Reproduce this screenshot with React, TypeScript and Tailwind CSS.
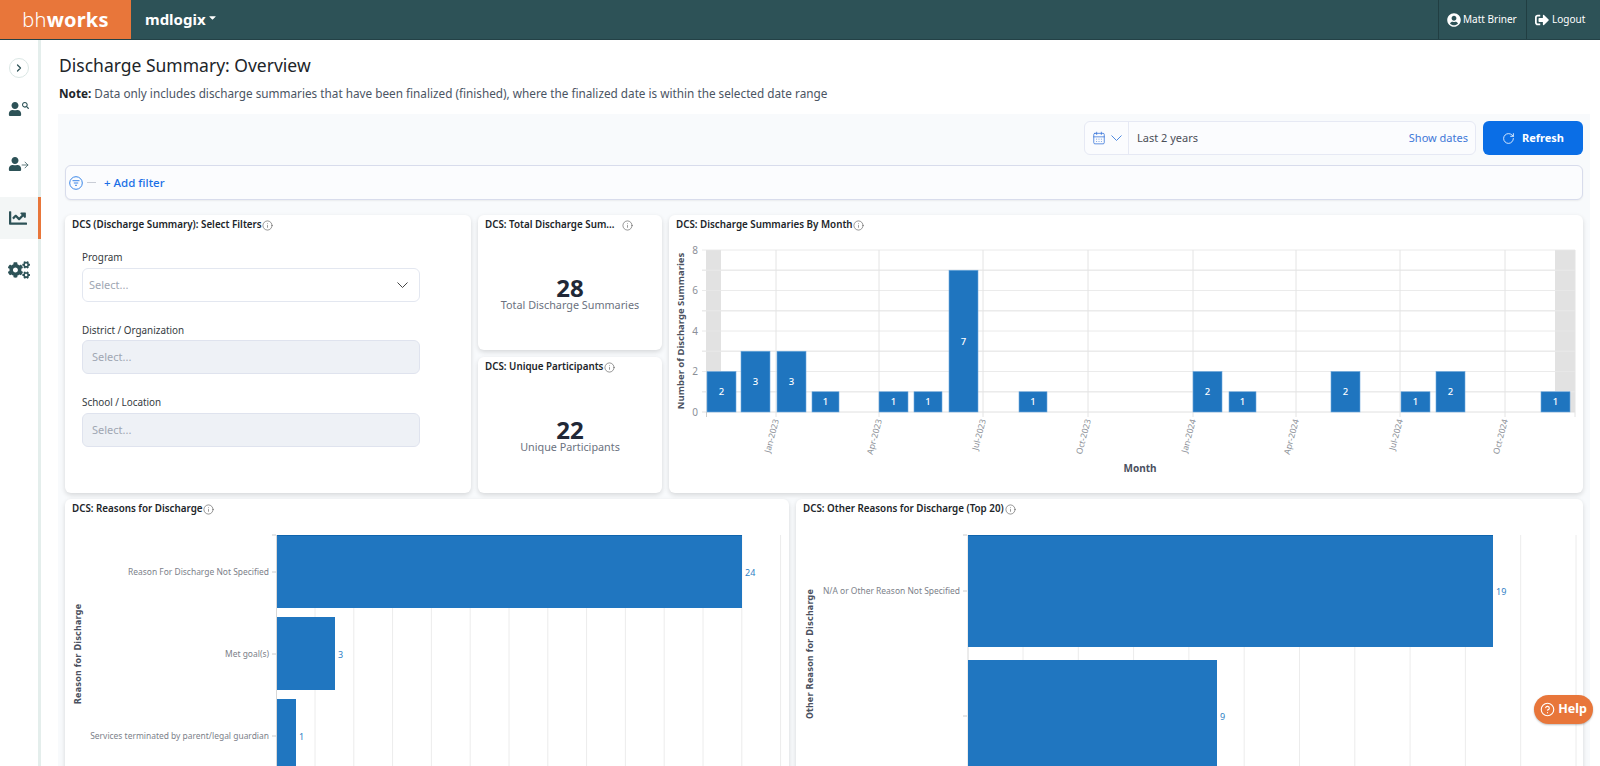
import React from "react";
import { FaUser, FaUserCircle, FaSignOutAlt, FaCogs, FaChartLine, FaSearch, FaCaretDown } from "react-icons/fa";
import { ChevronRight, ArrowRight, CalendarDays, RotateCw, Info, CircleHelp } from "lucide-react";

const Chevron = ({ className }: { className: string }) => (
  <svg width="11" height="6" viewBox="0 0 11 6" fill="none" stroke="currentColor" strokeWidth="1" className={className}>
    <path d="M0.5 0.5 5.5 5.5 10.5 0.5" />
  </svg>
);

const Title = ({ text, gap = "ml-[2px]" }: { text: string; gap?: string }) => (
  <div className="flex items-center h-5 pl-[7px] pt-[1px] text-[9.8px] font-semibold text-[#212529] whitespace-nowrap">
    <span>{text}</span>
    <Info className={`${gap} w-[11px] h-[11px] text-[#444]`} strokeWidth={1.2} />
  </div>
);

const Card = ({ className, children }: { className: string; children: React.ReactNode }) => (
  <div className={`bg-white rounded-md shadow-[0_2px_5px_rgba(0,0,0,0.14)] overflow-hidden ${className}`}>{children}</div>
);

const Field = ({ label, disabled, className, boxGap }: { label: string; disabled?: boolean; className: string; boxGap: string }) => (
  <div className={className}>
    <div className="h-[15px] text-[9.9px] leading-[15px] text-[#343a40]">{label}</div>
    <div
      className={`${boxGap} h-[34px] rounded-md border flex items-center justify-between text-[11px] text-[#a0a7b3] ${
        disabled ? "bg-[#eef1f6] border-[#dfe3ee] pl-[9px]" : "bg-white border-[#e3e7f0] pl-[6px] pr-[11px]"
      }`}
    >
      <span>Select...</span>
      {!disabled && <Chevron className="text-[#444]" />}
    </div>
  </div>
);

const Stat = ({ title, value, label, className, gap }: { title: string; value: string; label: string; className: string; gap?: string }) => (
  <Card className={`flex flex-col ${className}`}>
    <Title text={title} gap={gap} />
    <div className="flex-1 flex flex-col items-center justify-center pt-[3px]">
      <div className="h-[21px] text-2xl leading-[24px] font-bold text-[#212837]">{value}</div>
      <div className="text-[10.8px] leading-[16px] text-[#6b7280]">{label}</div>
    </div>
  </Card>
);

const monthBars: [number, number, number][] = [
  [707, 736, 2], [741, 770, 3], [777, 806, 3], [812, 839, 1], [879, 908, 1], [914, 942, 1], [949, 978, 7], [1019, 1047, 1],
  [1193, 1222, 2], [1229, 1256, 1], [1331, 1360, 2], [1401, 1430, 1], [1436, 1465, 2], [1541, 1570, 1],
];
const monthTicks: [number, string][] = [
  [776, "Jan-2023"], [879, "Apr-2023"], [983, "Jul-2023"], [1088, "Oct-2023"],
  [1193, "Jan-2024"], [1296, "Apr-2024"], [1400, "Jul-2024"], [1505, "Oct-2024"],
];
const base = 412;
const unit = 20.25;

const MonthChart = () => (
  <svg width="914" height="258" className="block">
    <g transform="translate(-669,-235)" fontFamily="'Noto Sans', sans-serif">
      <rect x="706" y="250" width="15" height="162" fill="#e2e2e2" />
      <rect x="1555" y="250" width="20" height="162" fill="#e2e2e2" />
      {Array.from({ length: 9 }).map((_, i) => (
        <line key={i} x1="702" x2="1575" y1={base - i * unit} y2={base - i * unit} stroke={i === 0 ? "#dcdcdc" : "#e8e8e8"} strokeWidth={i % 2 ? 1.5 : 1} opacity="0.85" />
      ))}
      {monthTicks.map(([x]) => (
        <line key={x} x1={x} x2={x} y1="250" y2="417" stroke="#e4e4e4" />
      ))}
      <line x1="706.5" x2="706.5" y1="412" y2="417" stroke="#ccc" />
      <line x1="1575" x2="1575" y1="250" y2="417" stroke="#e4e4e4" />
      {[0, 2, 4, 6, 8].map((v) => (
        <text key={v} x="698" y={base - v * unit + 3.5} textAnchor="end" fontSize="10" fill="#8b8f97">{v}</text>
      ))}
      {monthBars.map(([a, b, v]) => (
        <g key={a}>
          <rect x={a} y={base - v * unit} width={b - a} height={v * unit} fill="#1f75bf" stroke="#6ea9dc" strokeWidth="0.6" />
          <text x={(a + b) / 2} y={base - (v * unit) / 2 + 3.5} textAnchor="middle" fontSize="9.5" fontWeight="500" fill="#fff">{v}</text>
        </g>
      ))}
      {monthTicks.map(([x, t]) => (
        <text key={t} transform={`translate(${x + 3},420) rotate(-75)`} textAnchor="end" fontSize="8.5" fill="#8b8f97">{t}</text>
      ))}
      <text transform="translate(684,331) rotate(-90)" textAnchor="middle" fontSize="9.5" fontWeight="700" fill="#4b5160">Number of Discharge Summaries</text>
      <text x="1140" y="472" textAnchor="middle" fontSize="10" fontWeight="700" fill="#4b5160">Month</text>
    </g>
  </svg>
);

const ReasonChart = () => (
  <svg width="724" height="247" className="block">
    <g transform="translate(-65,-519)" fontFamily="'Noto Sans', sans-serif">
      {Array.from({ length: 13 }).map((_, i) => (
        <line key={i} x1={315 + i * 38.8} x2={315 + i * 38.8} y1="535" y2="766" stroke="#ececec" />
      ))}
      <line x1="276.5" x2="276.5" y1="535" y2="766" stroke="#d8d8d8" />
      <line x1="272" x2="276" y1="535" y2="535" stroke="#ccc" />
      <rect x="277" y="535" width="465" height="73" fill="#2076c0" />
      <line x1="277" x2="742" y1="535.5" y2="535.5" stroke="#0f64ad" />
      <rect x="277" y="617" width="58" height="73" fill="#2076c0" />
      <rect x="277" y="699" width="19" height="67" fill="#2076c0" />
      {[[572, "Reason For Discharge Not Specified"], [654, "Met goal(s)"], [736, "Services terminated by parent/legal guardian"]].map(([y, t]) => (
        <g key={String(t)}>
          <line x1="272" x2="276" y1={Number(y)} y2={Number(y)} stroke="#ccc" />
          <text x="269" y={Number(y) + 3} textAnchor="end" fontSize="8.45" fill="#7c818a">{t}</text>
        </g>
      ))}
      <text x="745" y="576" fontSize="9" fill="#2f7fc5">24</text>
      <text x="338" y="658" fontSize="9" fill="#2f7fc5">3</text>
      <text x="299" y="740" fontSize="9" fill="#2f7fc5">1</text>
      <text transform="translate(81,654) rotate(-90)" textAnchor="middle" fontSize="8" fontWeight="700" letterSpacing="0.2" fill="#4b5160" fontFamily="'DejaVu Sans', sans-serif">Reason for Discharge</text>
    </g>
  </svg>
);

const OtherChart = () => (
  <svg width="787" height="247" className="block">
    <g transform="translate(-796,-519)" fontFamily="'Noto Sans', sans-serif">
      {Array.from({ length: 11 }).map((_, i) => (
        <line key={i} x1={1023 + i * 55.3} x2={1023 + i * 55.3} y1="535" y2="766" stroke="#ececec" />
      ))}
      <line x1="968" x2="968" y1="535" y2="766" stroke="#d8d8d8" />
      <line x1="963" x2="967" y1="535" y2="535" stroke="#ccc" />
      <line x1="963" x2="967" y1="591" y2="591" stroke="#ccc" />
      <line x1="963" x2="967" y1="716" y2="716" stroke="#ccc" />
      <rect x="968" y="535" width="525" height="112" fill="#2076c0" />
      <line x1="968" x2="1493" y1="535.5" y2="535.5" stroke="#0f64ad" />
      <rect x="968" y="660" width="249" height="106" fill="#2076c0" />
      <text x="960" y="594" textAnchor="end" fontSize="8.45" fill="#7c818a">N/A or Other Reason Not Specified</text>
      <text x="1496" y="595" fontSize="9" fill="#2f7fc5">19</text>
      <text x="1220" y="720" fontSize="9" fill="#2f7fc5">9</text>
      <text transform="translate(813,654) rotate(-90)" textAnchor="middle" fontSize="8" fontWeight="700" letterSpacing="0.2" fill="#4b5160" fontFamily="'DejaVu Sans', sans-serif">Other Reason for Discharge</text>
    </g>
  </svg>
);

const Sidebar = () => (
  <aside className="w-[41px] shrink-0 border-r-[3px] border-[#e4eeec] flex flex-col items-stretch text-[#2d5257]">
    <div className="h-[20px] mt-[18px] flex justify-center">
      <div className="w-5 h-5 rounded-full border border-[#dbe7e5] flex items-center justify-center">
        <ChevronRight className="w-3 h-3 text-[#2d5257]" strokeWidth={2.5} />
      </div>
    </div>
    <div className="relative h-[16px] mt-[23px] pl-2">
      <FaUser className="w-[14px] h-[14px] mt-[1px]" />
      <FaSearch className="absolute left-[22px] top-[1px] w-[7px] h-[7px]" />
    </div>
    <div className="relative h-[16px] mt-[40px] pl-2">
      <FaUser className="w-[14px] h-[14px]" />
      <ArrowRight className="absolute left-[20px] top-[3px] w-[10px] h-[10px]" strokeWidth={1.8} />
    </div>
    <div className="h-[42px] mt-[24px] -mr-[3px] bg-[#f3f6f6] border-r-[3px] border-[#e8763a] flex items-center pl-[9px]">
      <FaChartLine className="w-[18px] h-[18px]" />
    </div>
    <div className="mt-[22px] pl-2">
      <FaCogs className="w-[22px] h-[18px]" />
    </div>
  </aside>
);

export default function App() {
  return (
    <div className="relative w-[1600px] h-[766px] overflow-hidden flex flex-col bg-white font-['Noto_Sans',sans-serif]">
      <header className="h-10 shrink-0 flex bg-[#2d5257] border-b border-[#234146] text-white">
        <div className="w-[131px] bg-[#e8763a] flex items-center justify-center text-[20px] tracking-[0.2px]">
          <span className="font-light">bh</span>
          <span className="font-bold">works</span>
        </div>
        <div className="flex items-center pl-[14px] text-[15px] font-bold">
          mdlogix
          <FaCaretDown className="w-[11px] h-[11px] ml-[1px] -mt-1" />
        </div>
        <div className="ml-auto flex text-[10px]">
          <div className="w-[88px] border-l border-[#213e42] flex items-center pl-2 gap-[2px]">
            <FaUserCircle className="w-[14px] h-[14px]" />
            Matt Briner
          </div>
          <div className="w-[74px] border-l border-[#213e42] flex items-center pl-2 gap-[3px]">
            <FaSignOutAlt className="w-[14px] h-[14px]" />
            Logout
          </div>
        </div>
      </header>
      <div className="flex flex-1 min-h-0">
        <Sidebar />
        <main className="flex-1 min-w-0 pl-[17px] pr-[10px]">
          <h1 className="mt-[12px] h-[26px] leading-[26px] text-[17.5px] text-[#212529] pl-px">Discharge Summary: Overview</h1>
          <p className="mt-[6px] h-[18px] leading-[18px] text-[11.75px] text-[#4b5563] pl-px">
            <b className="font-bold text-[#212529]">Note:</b> Data only includes discharge summaries that have been finalized (finished), where the finalized date is within the selected date range
          </p>
          <div className="mt-[12px] h-[700px] bg-[#f8fafc] px-[7px] pt-[7px]">
            <div className="flex justify-end gap-[7px]">
              <div className="w-[392px] h-[34px] flex items-center bg-[#fbfcfe] border border-[#e6e9f4] rounded-md text-[11px]">
                <div className="w-[44px] h-full border-r border-[#e6e9f4] flex items-center pl-[7px] gap-[5px] text-[#2f6fd8]">
                  <CalendarDays className="w-[14px] h-[14px]" strokeWidth={1.3} />
                  <Chevron className="text-[#4f8ae0]" />
                </div>
                <span className="pl-2 text-[#4b4f58]">Last 2 years</span>
                <span className="ml-auto pr-[7px] text-[#3f78d8]">Show dates</span>
              </div>
              <button className="w-[100px] h-[34px] rounded-md bg-[#0a6ee6] text-white text-[11px] font-bold flex items-center justify-center gap-[7px]">
                <RotateCw className="w-[13px] h-[13px]" strokeWidth={1.5} />
                Refresh
              </button>
            </div>
            <div className="mt-[10px] h-[35px] rounded-md border border-[#d8dcec] bg-[#fbfcfe] shadow-[0_1px_2px_rgba(0,0,0,0.06)] flex items-center pl-[3px] text-[11.5px] font-medium text-[#1a6fe6]">
              <svg width="14" height="14" viewBox="0 0 14 14" fill="none" stroke="#3a86e8" strokeWidth="1">
                <circle cx="7" cy="7" r="6.3" />
                <path d="M3.5 4.7h7M4.8 7h4.4M6 9.3h2" />
              </svg>
              <span className="w-[9px] h-px bg-[#c9cdd6] ml-[4px]" />
              <span className="ml-[8px]">+ Add filter</span>
            </div>
            <div className="mt-[15px] flex gap-[7px] h-[278px]">
              <Card className="w-[406px] shrink-0">
                <Title text="DCS (Discharge Summary): Select Filters" gap="ml-0" />
                <div className="pl-[17px] pr-[51px]">
                  <Field label="Program" className="mt-[15px]" boxGap="mt-[3px]" />
                  <Field label="District / Organization" disabled className="mt-[21px]" boxGap="mt-[2px]" />
                  <Field label="School / Location" disabled className="mt-[21px]" boxGap="mt-[3px]" />
                </div>
              </Card>
              <div className="w-[184px] shrink-0 flex flex-col gap-[7px]">
                <Stat title="DCS: Total Discharge Sum..." value="28" label="Total Discharge Summaries" className="h-[135px]" gap="ml-[8px]" />
                <Stat title="DCS: Unique Participants" value="22" label="Unique Participants" className="flex-1" gap="ml-[1px]" />
              </div>
              <Card className="flex-1">
                <Title text="DCS: Discharge Summaries By Month" gap="ml-0" />
                <MonthChart />
              </Card>
            </div>
            <div className="mt-[6px] flex gap-[7px]">
              <Card className="w-[724px] shrink-0 h-[300px]">
                <Title text="DCS: Reasons for Discharge" gap="ml-0" />
                <ReasonChart />
              </Card>
              <Card className="flex-1 h-[300px]">
                <Title text="DCS: Other Reasons for Discharge (Top 20)" gap="ml-[1px]" />
                <OtherChart />
              </Card>
            </div>
          </div>
        </main>
      </div>
      <div className="absolute left-[1534px] top-[695px] w-[59px] h-[29px] rounded-full bg-[#e8763a] text-white text-[12.5px] font-bold flex items-center justify-center gap-[3px] shadow-[0_1px_2px_rgba(0,0,0,0.25)]">
        <CircleHelp className="w-[15px] h-[15px]" strokeWidth={1.8} />
        Help
      </div>
    </div>
  );
}
